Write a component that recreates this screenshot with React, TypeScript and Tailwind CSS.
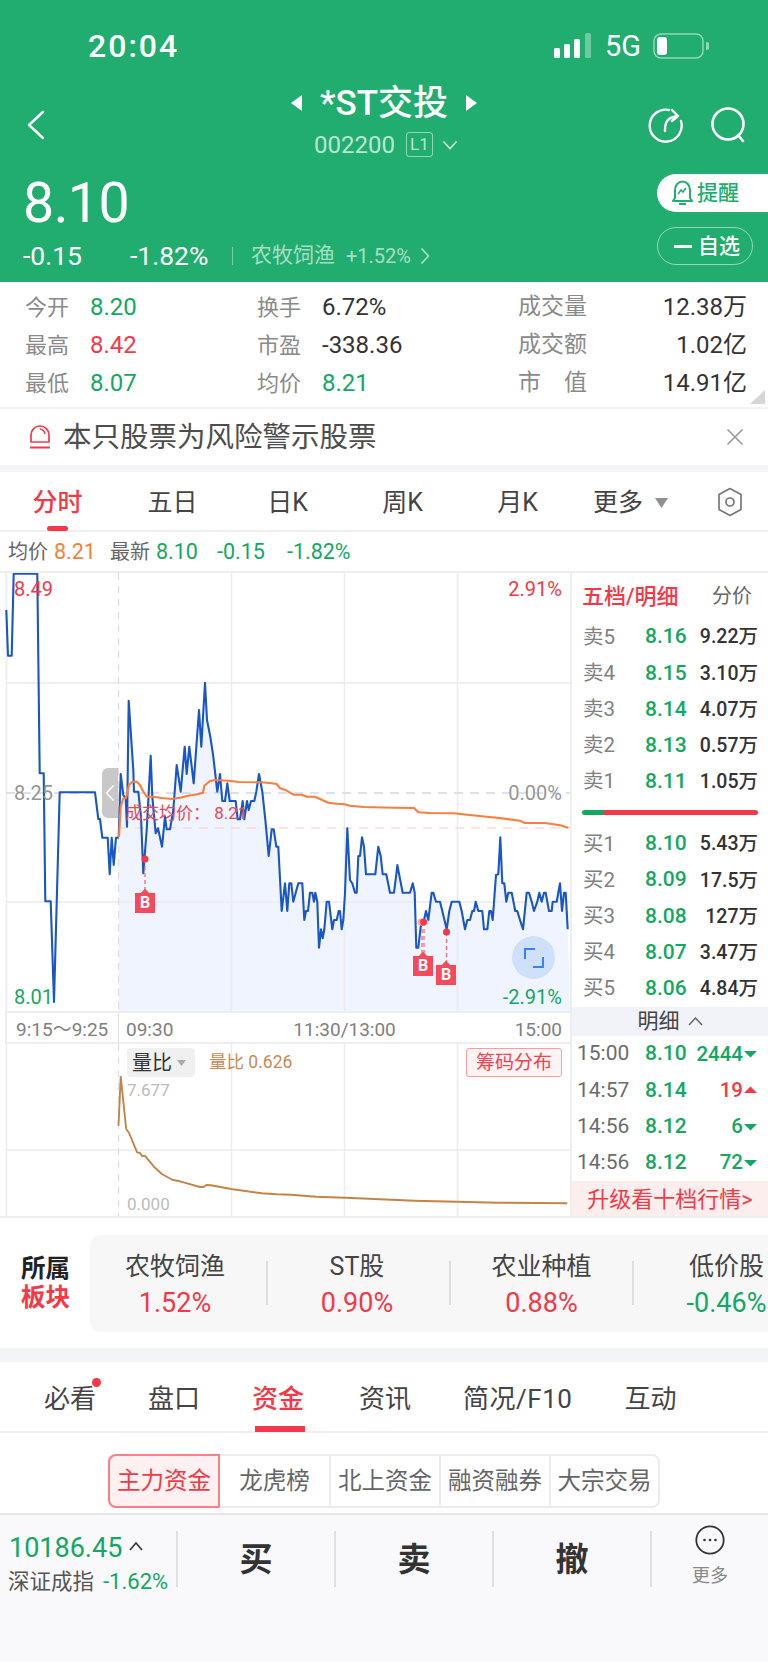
import React from "react";

const z = (ox: number, oy: number, sx: number, sy: number, a: number[]) => {
  const out: string[] = [];
  for (let i = 0; i < a.length; i += 2) out.push(`${(ox + a[i] / sx).toFixed(1)},${(oy + a[i + 1] / sy).toFixed(1)}`);
  return out;
};

const pre = "6.3,610 8,655.7 11.7,655.7 13.7,573.8 37.3,573.8 39.7,773.3 43.7,773.3 45.3,901.3 50.7,901.3 54,1002 59.7,792.3 95,792.3 98.3,819 100,819 102.3,837.7 107.7,837.7 109.7,874.3 111.7,837.7 113.7,865 116,837.7 118.7,837.7";

const main = [
  ...z(115, 670, 3, 3, [11,500,17,312,25,375,32,385,36,470,41,92,55,300,57,365,70,365,78,440,85,610,95,480,107,257,112,380,122,490,129,475,141,530,150,440,155,478,165,478,175,420,185,285,197,365,209,230,215,312,223,230,236,340,252,120,259,230,270,38,276,150,286,200,295,260,307,365,315,312,322,393,330,393,337,340,344,393,362,393,368,448,375,448,383,393,388,448,396,393,401,420,408,393,418,393,424,365,432,312,442,365,451,448,461,558,470,478,476,478,484,530,490,530]),
  ...z(270, 780, 3, 3, [35,393,45,310,52,393,58,310,64,310,70,365,77,338,85,310,97,310,103,420,108,393,114,393,120,338,127,338,132,365,136,338,142,365,147,503,153,448,158,475,163,448,170,365,177,365,187,448,192,420,200,420,206,393,210,393,215,448,220,420,225,340,232,145,240,300,247,310,255,338,260,338,265,228,270,228,276,172,282,200,288,283,316,283,325,200,332,228,338,283,349,283,360,338,372,338,379,283,382,255,398,338,420,338]),
  ...z(410, 780, 3, 3, [8,310,14,338,19,503,25,503,32,440,42,420,48,393,55,420,65,338,70,338,78,365,90,365,97,393,110,448,118,393,125,365,148,365,155,393,165,448,172,420,180,420,187,393,192,393,197,365,205,393,217,393,222,448,232,448,238,393,243,393,248,420,258,285,265,283,271,172,277,310,283,310,289,365,295,338,305,338,316,393,322,393,330,420,339,448,350,338,357,338,365,365,372,393,382,365,388,338,395,365,402,338,407,338,417,393,425,393,428,365,440,365,450,310,456,393,462,338,467,338,473,448]),
];

const avg = [
  ...z(115, 670, 3, 3, [12,500,17,410,25,385,33,385,42,345,52,335,65,335,75,345,85,365,95,380,115,380,140,384,170,387,195,383,220,377,250,372,264,368,268,347,285,333,300,330,340,332,370,336,440,337,470,340,485,342,495,355]),
  ...z(270, 780, 3, 3, [30,25,45,29,60,38,70,44,95,44,110,50,135,50,175,68,200,71,220,72,240,77,280,81,370,83,432,84,445,97]),
  ...z(410, 780, 3, 3, [24,97,60,99,130,100,200,107,260,113,330,122,345,129,405,129,450,136,475,143]),
];

const ratio = z(0, 1010, 2.75, 3, [326,350,332,203,347,360,355,372,377,430,385,432,390,440,400,442,425,475,445,495,475,513,495,517,550,534,560,534,568,528,580,529,640,541,720,553,760,556,800,557,870,563,950,566,1140,575,1370,581,1560,583]);

const GREEN = "text-[#12a862]";
const RED = "text-[#f53847]";

function Stat({ label, value, color }: { label: React.ReactNode; value: string; color: string }) {
  return (
    <div className="flex items-center h-[38px]">
      <div className="w-[65px] text-[22px] text-[#8a8a8a]">{label}</div>
      <div className={`text-[24px] ${color}`}>{value}</div>
    </div>
  );
}

function Quote({ label, price, vol }: { label: string; price: string; vol: string }) {
  return (
    <div className="flex items-center h-[36.2px] pl-[11px] pr-[10px]">
      <span className="w-[62px] text-[20.5px] text-[#808080]">{label}</span>
      <span className={`w-[42px] text-[21px] font-medium ${GREEN}`}>{price}</span>
      <span className="flex-1 text-right text-[19.5px] text-[#333] font-medium">{vol}</span>
    </div>
  );
}

function Trade({ time, price, vol, up }: { time: string; price: string; vol: string; up?: boolean }) {
  return (
    <div className="flex items-center h-[36.25px] pl-[5px] pr-[11px]">
      <span className="w-[68px] text-[21px] text-[#6b6b6b]">{time}</span>
      <span className={`w-[42px] text-[21px] font-medium ${GREEN}`}>{price}</span>
      <span className={`flex-1 text-right text-[20.5px] font-medium ${up ? RED : GREEN}`}>{vol}</span>
      <svg width="13" height="8" viewBox="0 0 13 8" className="ml-[1px]">
        {up ? <path d="M0 7 L6.5 0.5 L13 7 Z" fill="#f53847" /> : <path d="M0 1 L13 1 L6.5 7.5 Z" fill="#12a862" />}
      </svg>
    </div>
  );
}

function Badge({ className }: { className: string }) {
  return (
    <div className={`absolute w-[20px] h-[20px] bg-[#f64a5c] flex items-center justify-center text-white text-[16px] font-bold leading-none ${className}`}>
      <span className="absolute -top-[3px] left-[7px] w-[6px] h-[6px] rotate-45 bg-[#f64a5c]" />
      <span className="relative">B</span>
    </div>
  );
}

export default function App() {
  return (
    <div className="w-[768px] h-[1662px] bg-white flex flex-col overflow-hidden [font-family:Roboto,'Noto_Sans_CJK_SC',sans-serif]">
      {/* Header */}
      <div className="h-[282px] shrink-0 bg-[#21ad6f] text-white flex flex-col">
        <div className="h-[84px] flex items-center pt-[8px] shrink-0">
          <div className="ml-[88px] text-[32px] font-medium tracking-[2px] leading-none">20:04</div>
          <div className="ml-auto flex items-center mr-[59px]">
            <svg width="40" height="26" viewBox="0 0 40 26">
              <rect x="0" y="15" width="6" height="10" rx="1.5" fill="#fff" />
              <rect x="10" y="11" width="6" height="14" rx="1.5" fill="#fff" />
              <rect x="20" y="6" width="6" height="19" rx="1.5" fill="#fff" />
              <rect x="31" y="0" width="6" height="25" rx="1.5" fill="#ffffff" fillOpacity="0.35" />
            </svg>
            <span className="ml-[11px] text-[29px] leading-none">5G</span>
            <svg width="56" height="26" viewBox="0 0 56 26" className="ml-[12px]">
              <rect x="1" y="1" width="49" height="24" rx="7" fill="none" stroke="#ffffff" strokeOpacity="0.5" strokeWidth="1.5" />
              <rect x="4" y="4" width="10" height="18" rx="3" fill="#fff" />
              <path d="M53 9 a4 4 0 0 1 0 8 Z" fill="#ffffff" fillOpacity="0.5" />
            </svg>
          </div>
        </div>
        <div className="h-[79px] grid grid-cols-[1fr_auto_1fr] shrink-0">
          <div className="flex items-center pl-[27px] pt-[2px]">
            <svg width="18" height="30" viewBox="0 0 18 30" fill="none" stroke="#fff" strokeWidth="2.4" strokeLinecap="round" strokeLinejoin="round">
              <path d="M16 2 L2 15 L16 28" />
            </svg>
          </div>
          <div className="flex flex-col items-center">
            <div className="flex items-center h-[36px] mt-[1px]">
              <svg width="12" height="16" viewBox="0 0 12 16"><path d="M11 0 L11 16 L0 8 Z" fill="#fff" /></svg>
              <span className="mx-[17px] text-[35px] leading-none font-medium">*ST交投</span>
              <svg width="12" height="16" viewBox="0 0 12 16"><path d="M1 0 L1 16 L12 8 Z" fill="#fff" /></svg>
            </div>
            <div className="flex items-center mt-[11px] text-white/70 ml-[4px]">
              <span className="text-[24px] leading-none">002200</span>
              <span className="ml-[11px] w-[27px] h-[25px] border border-white/50 rounded-[3px] flex items-center justify-center text-[17px] leading-none">L1</span>
              <svg width="16" height="10" viewBox="0 0 16 10" fill="none" stroke="#ffffffcc" strokeWidth="1.6" className="ml-[9px]"><path d="M1.5 1.5 L8 8.5 L14.5 1.5" /></svg>
            </div>
          </div>
          <div className="flex items-center justify-end pr-[20px] gap-[25px] pt-[2px]">
            <svg width="38" height="36" viewBox="0 0 38 36" fill="none" stroke="#fff" strokeWidth="2.4" strokeLinecap="round">
              <path d="M22 3 A16 16 0 1 0 34 14" />
              <path d="M18 24 C18 15 20 11 30 9" />
              <path d="M25 3 L31 9 L25 14" strokeLinejoin="round" />
            </svg>
            <svg width="38" height="36" viewBox="0 0 38 36" fill="none" stroke="#fff" strokeWidth="2.6" strokeLinecap="round">
              <circle cx="18" cy="17" r="15.5" />
              <path d="M28 28 L33 34" />
            </svg>
          </div>
        </div>
        <div className="flex-1 flex justify-between">
          <div className="pl-[23px] flex flex-col">
            <div className="text-[55.5px] leading-none mt-[13px] tracking-[-0.5px] h-[56px]">8.10</div>
            <div className="flex items-center mt-[9px] h-[30px]">
              <span className="w-[107px] text-[26.5px]">-0.15</span>
              <span className="w-[102px] text-[26.5px]">-1.82%</span>
              <span className="w-px h-[18px] bg-white/40" />
              <span className="ml-[18px] text-[21px] text-white/60">农牧饲渔</span>
              <span className="ml-[11px] text-[20px] text-white/60">+1.52%</span>
              <svg width="10" height="18" viewBox="0 0 10 18" fill="none" stroke="#ffffffa0" strokeWidth="1.6" className="ml-[9px]"><path d="M1.5 1.5 L8.5 9 L1.5 16.5" /></svg>
            </div>
          </div>
          <div className="flex flex-col items-end mt-[11px]">
            <div className="w-[111px] h-[38px] bg-white rounded-l-full flex items-center pl-[15px] text-[#21ad6f]">
              <svg width="21" height="28" viewBox="0 0 21 28" fill="none" stroke="#21ad6f" strokeWidth="2">
                <path d="M3 19 V11 a7.5 8.5 0 0 1 15 0 V19 L20 22 H1 Z" strokeLinejoin="round" />
                <path d="M6 15 L9 11 L11 13 L14 9" strokeWidth="1.5" />
                <path d="M7 25 H14" />
              </svg>
              <span className="ml-[4px] text-[21px] font-medium pt-[2px]">提醒</span>
            </div>
            <div className="mt-[15px] mr-[15px] w-[96px] h-[38px] border border-white/50 rounded-full flex items-center pl-[16px]">
              <span className="w-[18px] h-[3px] bg-white" />
              <span className="ml-[6px] text-[21px] font-medium pt-[1px]">自选</span>
            </div>
          </div>
        </div>
      </div>

      {/* Stats */}
      <div className="h-[125px] shrink-0 relative pl-[25px] pt-[6px] flex">
        <div className="w-[232px]">
          <Stat label="今开" value="8.20" color={GREEN} />
          <Stat label="最高" value="8.42" color={RED} />
          <Stat label="最低" value="8.07" color={GREEN} />
        </div>
        <div className="w-[261px]">
          <Stat label="换手" value="6.72%" color="text-[#333]" />
          <Stat label="市盈" value="-338.36" color="text-[#333]" />
          <Stat label="均价" value="8.21" color={GREEN} />
        </div>
        <div className="w-[229px]">
          {[["成交量", "12.38万"], ["成交额", "1.02亿"]].map(([l, v]) => (
            <div key={l} className="flex items-center justify-between h-[38px]">
              <span className="text-[23px] text-[#8a8a8a]">{l}</span>
              <span className="text-[24px] text-[#333]">{v}</span>
            </div>
          ))}
          <div className="flex items-center justify-between h-[38px]">
            <span className="w-[69px] flex justify-between text-[23px] text-[#8a8a8a]"><span>市</span><span>值</span></span>
            <span className="text-[24px] text-[#333]">14.91亿</span>
          </div>
        </div>
        <svg width="15" height="14" viewBox="0 0 15 14" className="absolute right-[3px] bottom-[3px]"><path d="M15 0 V14 H0 Z" fill="#d6d6d6" /></svg>
      </div>

      {/* Warning */}
      <div className="h-[58px] shrink-0 border-t-2 border-[#f3f4f8] flex items-center pl-[29px] pr-[24px]">
        <svg width="22" height="26" viewBox="0 0 22 26" fill="none" stroke="#f53847" strokeWidth="1.7">
          <path d="M2 18 V11 a9 9 0 0 1 18 0 V18 Z" />
          <path d="M1 23.5 H21" strokeWidth="2" />
          <path d="M11 5 a6 6 0 0 1 5 5" strokeWidth="1.4" />
        </svg>
        <span className="ml-[12px] text-[28.5px] text-[#4d4d4d] leading-none pt-[2px]">本只股票为风险警示股票</span>
        <svg width="18" height="18" viewBox="0 0 18 18" fill="none" stroke="#9a9a9a" strokeWidth="1.6" className="ml-auto"><path d="M1.5 1.5 L16.5 16.5 M16.5 1.5 L1.5 16.5" /></svg>
      </div>
      <div className="h-[7px] shrink-0 bg-[#f3f4f8]" />

      {/* Period tabs */}
      <div className="h-[60px] shrink-0 border-b-2 border-[#eeeeee] flex items-center relative text-[25px] text-[#444] pt-[4px]">
        <div className={`w-[115px] text-center font-medium ${RED}`}>分时</div>
        <div className="w-[115px] text-center">五日</div>
        <div className="w-[115px] text-center">日K</div>
        <div className="w-[115px] text-center">周K</div>
        <div className="w-[115px] text-center">月K</div>
        <div className="ml-[18px] flex items-center">
          <span>更多</span>
          <svg width="13" height="10" viewBox="0 0 13 10" className="ml-[12px]"><path d="M0 0 H13 L6.5 10 Z" fill="#8f8f8f" /></svg>
        </div>
        <svg width="26" height="30" viewBox="0 0 26 30" fill="none" stroke="#777" strokeWidth="1.7" className="ml-[49px] -mt-[3px]">
          <path d="M13 1.5 L24 7.5 V22.5 L13 28.5 L2 22.5 V7.5 Z" strokeLinejoin="round" />
          <circle cx="13" cy="15" r="4" />
        </svg>
        <span className="absolute left-[47px] bottom-[-1px] w-[21px] h-[5px] rounded-full bg-[#f53847]" />
      </div>

      {/* Legend */}
      <div className="h-[41px] shrink-0 border-b-2 border-[#eeeeee] flex items-center pl-[8px] text-[21.5px] leading-none pt-[1px]">
        <span className="text-[#666] text-[20px] w-[46px]">均价</span>
        <span className="text-[#f6803a] w-[56px]">8.21</span>
        <span className="text-[#666] text-[20px] w-[46px]">最新</span>
        <span className={`${GREEN} w-[61px]`}>8.10</span>
        <span className={`${GREEN} w-[70px]`}>-0.15</span>
        <span className={GREEN}>-1.82%</span>
      </div>

      {/* Chart + panel */}
      <div className="h-[645px] shrink-0 flex border-b-2 border-[#eeeeee]">
        <div className="ml-[5px] w-[565px] flex flex-col">
          <div className="relative h-[438px] text-[20px] leading-none">
            <svg width="565" height="438" viewBox="5 573 565 438" className="absolute inset-0">
              <polygon points={`${main.join(" ")} 570,1011 118.7,1011`} fill="#eff4fe" />
              <g stroke="#ececee" strokeWidth="1.5">
                <path d="M6.5 573 V1011" />
                <path d="M6 683 H570 M6 902 H570" />
                <path d="M231.5 573 V1011 M344.5 573 V1011 M457.5 573 V1011" />
              </g>
              <path d="M118.5 573 V1011" stroke="#dddddd" strokeWidth="1.2" strokeDasharray="7 6" />
              <path d="M6 793 H570" stroke="#cdd9e8" strokeWidth="1.3" strokeDasharray="9 7" />
              <path d="M119 828 H570" stroke="#fbd9dd" strokeWidth="1.5" strokeDasharray="9 7" />
              <polyline points={pre} fill="none" stroke="#1a56c4" strokeWidth="2.1" strokeLinejoin="round" />
              <polyline points={main.join(" ")} fill="none" stroke="#1a56c4" strokeWidth="2.1" strokeLinejoin="round" />
              <polyline points={avg.join(" ")} fill="none" stroke="#ff7d3c" strokeWidth="2.1" strokeLinejoin="round" />
              <g stroke="#f4697a" strokeWidth="1.3" strokeDasharray="4 3">
                <path d="M145 859 V892 M422 922 V955 M424 922 V955 M446.5 932 V964" />
              </g>
              <circle cx="421" cy="922" r="3.5" fill="#f9a5ae" />
              <g fill="#f53847">
                <circle cx="145" cy="859" r="3.5" />
                <circle cx="423.6" cy="922" r="3.5" />
                <circle cx="446.5" cy="932" r="3.5" />
              </g>
            </svg>
            <span className={`absolute left-[9px] top-[6px] ${RED}`}>8.49</span>
            <span className={`absolute right-[8px] top-[6px] ${RED}`}>2.91%</span>
            <span className="absolute left-[9px] top-[210px] text-[#969696]">8.25</span>
            <span className="absolute right-[8px] top-[210px] text-[#969696]">0.00%</span>
            <span className={`absolute left-[9px] top-[414px] ${GREEN}`}>8.01</span>
            <span className={`absolute right-[8px] top-[414px] ${GREEN}`}>-2.91%</span>
            <div className="absolute left-[97px] top-[195px] w-[16px] h-[50px] bg-[#c8c8c8] rounded-l-[6px] flex items-center justify-center">
              <svg width="10" height="18" viewBox="0 0 10 18" fill="none" stroke="#fff" strokeWidth="1.4"><path d="M8.5 1.5 L1.5 9 L8.5 16.5" /></svg>
            </div>
            <span className="absolute left-[120px] top-[232px] text-[17px] text-[#e84856] whitespace-nowrap">成交均价： 8.21</span>
            <Badge className="left-[130px] top-[320px]" />
            <Badge className="left-[408px] top-[383px]" />
            <Badge className="left-[431px] top-[392px]" />
            <div className="absolute left-[507px] top-[363px] w-[43px] h-[43px] rounded-full bg-[#cfe0fb] flex items-center justify-center">
              <svg width="20" height="20" viewBox="0 0 20 20" fill="none" stroke="#3b82f6" strokeWidth="2">
                <path d="M1 11 V1 H11" />
                <path d="M19 9 V19 H9" />
              </svg>
            </div>
          </div>
          <div className="h-[33px] relative flex items-center border-t-2 border-b-2 border-[#eeeeee] border-l-2 text-[19px] text-[#808080] leading-none">
            <span className="w-[112px] pl-[9px] whitespace-nowrap border-r border-[#e0e0e0] h-full flex items-center pt-[3px]">9:15～9:25</span>
            <span className="ml-[7px] pt-[3px]">09:30</span>
            <span className="ml-[120px] pt-[3px]">11:30/13:00</span>
            <span className="ml-auto mr-[8px] pt-[3px]">15:00</span>
          </div>
          <div className="relative flex-1">
            <svg width="565" height="172" viewBox="5 1045 565 172" className="absolute inset-0">
              <g stroke="#ececee" strokeWidth="1.5">
                <path d="M6.5 1045 V1217" />
                <path d="M6 1151 H570" />
                <path d="M231.5 1045 V1217 M344.5 1045 V1217 M457.5 1045 V1217" />
              </g>
              <path d="M118.5 1045 V1217" stroke="#dddddd" strokeWidth="1.2" strokeDasharray="7 6" />
              <polyline points={ratio.join(" ")} fill="none" stroke="#c58447" strokeWidth="1.9" strokeLinejoin="round" />
            </svg>
            <div className="absolute left-[122px] top-[4px] w-[68px] h-[29px] bg-[#f0f0f0] rounded-[4px] flex items-center pl-[5px]">
              <span className="text-[20px] text-[#333] leading-none">量比</span>
              <svg width="9" height="6" viewBox="0 0 9 6" className="ml-[5px]"><path d="M0 0 H9 L4.5 6 Z" fill="#aaaaaa" /></svg>
            </div>
            <span className="absolute left-[204px] top-[10px] text-[17.5px] leading-none text-[#c68a55]">量比 0.626</span>
            <div className="absolute left-[461px] top-[4px] w-[96px] h-[29px] border border-[#ff9a9f] bg-[#fff4f4] rounded-[3px] flex items-center justify-center text-[19px] leading-none text-[#f4404c]">筹码分布</div>
            <span className="absolute left-[122px] top-[38px] text-[17px] leading-none text-[#bbbbbb]">7.677</span>
            <span className="absolute left-[122px] top-[152px] text-[17px] leading-none text-[#bbbbbb]">0.000</span>
          </div>
        </div>
        <div className="w-[198px] border-l-2 border-[#eeeeee] flex flex-col">
          <div className="h-[46px] flex items-center pl-[10px] pr-[16px] justify-between">
            <span className={`text-[22px] font-medium ${RED}`}>五档/明细</span>
            <span className="text-[20px] text-[#666]">分价</span>
          </div>
          <Quote label="卖5" price="8.16" vol="9.22万" />
          <Quote label="卖4" price="8.15" vol="3.10万" />
          <Quote label="卖3" price="8.14" vol="4.07万" />
          <Quote label="卖2" price="8.13" vol="0.57万" />
          <Quote label="卖1" price="8.11" vol="1.05万" />
          <div className="h-[26px] flex items-center px-[10px]">
            <div className="w-full h-[5px] rounded-full bg-[linear-gradient(105deg,#12a862_12%,#f53847_13%)]" />
          </div>
          <Quote label="买1" price="8.10" vol="5.43万" />
          <Quote label="买2" price="8.09" vol="17.5万" />
          <Quote label="买3" price="8.08" vol="127万" />
          <Quote label="买4" price="8.07" vol="3.47万" />
          <Quote label="买5" price="8.06" vol="4.84万" />
          <div className="h-[29px] bg-[#f2f3f8] flex items-center justify-center text-[21px] text-[#444]">
            <span>明细</span>
            <svg width="15" height="9" viewBox="0 0 15 9" fill="none" stroke="#666" strokeWidth="1.5" className="ml-[8px]"><path d="M1 8 L7.5 1 L14 8" /></svg>
          </div>
          <Trade time="15:00" price="8.10" vol="2444" />
          <Trade time="14:57" price="8.14" vol="19" up />
          <Trade time="14:56" price="8.12" vol="6" />
          <Trade time="14:56" price="8.12" vol="72" />
          <div className={`flex-1 bg-[#fdeeee] flex items-center justify-center text-[22px] pt-[2px] ${RED}`}>升级看十档行情&gt;</div>
        </div>
      </div>

      {/* Sectors */}
      <div className="h-[130px] shrink-0 flex items-center">
        <div className="w-[90px] pl-[21px] text-[24.5px] leading-[29px] font-bold">
          <div className="text-[#222]">所属</div>
          <div className={RED}>板块</div>
        </div>
        <div className="flex-1 h-[97px] bg-[#f7f7f8] rounded-l-[10px] flex items-center overflow-hidden">
          {[
            ["农牧饲渔", "1.52%", RED, "w-[178px] pr-[6px]"],
            ["ST股", "0.90%", RED, "w-[183px] pr-[3px]"],
            ["农业种植", "0.88%", RED, "w-[183px]"],
            ["低价股", "-0.46%", GREEN, "w-[134px] pl-[51px]"],
          ].map(([a, b, c, w], i) => (
            <div key={a} className={`shrink-0 h-[44px] flex flex-col items-center justify-center relative ${w} ${i < 3 ? "border-r-2 border-[#dedede]" : ""}`}>
              <span className="absolute top-[-9px] text-[25px] text-[#444] whitespace-nowrap leading-[30px]">{a}</span>
              <span className={`absolute top-[27px] text-[27px] whitespace-nowrap leading-[30px] ${c}`}>{b}</span>
            </div>
          ))}
        </div>
      </div>
      <div className="h-[14px] shrink-0 bg-[#f3f4f8]" />

      {/* Info tabs */}
      <div className="h-[71px] shrink-0 border-b-2 border-[#eeeeee] flex items-center pl-[44px] gap-[52px] text-[26px] text-[#444] relative pt-[6px]">
        <span className="relative">必看<span className="absolute top-[-2px] -right-[5px] w-[9px] h-[9px] rounded-full bg-[#f53847]" /></span>
        <span>盘口</span>
        <span className={`font-medium ${RED}`}>资金</span>
        <span className="ml-[3px]">资讯</span>
        <span className="tracking-[0.5px]">简况/F10</span>
        <span>互动</span>
        <span className="absolute left-[255px] bottom-[-1px] w-[50px] h-[6px] bg-[#f53847]" />
      </div>

      {/* Segment */}
      <div className="h-[80px] shrink-0 flex justify-center pt-[21px]">
        <div className="w-[552px] h-[54px] border-2 border-[#ececec] rounded-[8px] flex text-[23.5px] text-[#666]">
          <div className={`-m-[2px] mr-0 w-[112px] border-2 border-[#fb7f88] bg-[#fff1f1] rounded-l-[8px] flex items-center justify-center pt-[2px] ${RED}`}>主力资金</div>
          <div className="w-[109px] flex items-center justify-center pt-[2px]">龙虎榜</div>
          <div className="w-[110px] border-l-2 border-[#ececec] flex items-center justify-center pt-[2px]">北上资金</div>
          <div className="w-[110px] border-l-2 border-[#ececec] flex items-center justify-center pt-[2px]">融资融券</div>
          <div className="flex-1 border-l-2 border-[#ececec] flex items-center justify-center pt-[2px]">大宗交易</div>
        </div>
      </div>

      {/* Bottom bar */}
      <div className="flex-1 border-t-2 border-[#e6e6e6] bg-[#f9f9fb] pt-[16px]">
        <div className="flex h-[56px]">
          <div className="w-[176px] pl-[8px] relative">
            <div className={`absolute left-[9px] top-[4px] text-[27px] leading-none ${GREEN} flex items-center`}>
              <span>10186.45</span>
              <svg width="14" height="9" viewBox="0 0 14 9" fill="none" stroke="#333" strokeWidth="1.6" className="ml-[7px] mb-[4px]"><path d="M1 8 L7 1 L13 8" /></svg>
            </div>
            <div className="absolute left-[8px] top-[40px] flex items-center leading-none whitespace-nowrap">
              <span className="text-[21.5px] text-[#555]">深证成指</span>
              <span className={`ml-[9px] text-[22px] ${GREEN}`}>-1.62%</span>
            </div>
          </div>
          {["买", "卖", "撤"].map((t) => (
            <div key={t} className="w-[158px] border-l-2 border-[#e0e0e0] flex items-center justify-center text-[33px] font-bold text-[#333] leading-none">{t}</div>
          ))}
          <div className="flex-1 border-l-2 border-[#e0e0e0] relative flex flex-col items-center">
            <svg width="30" height="30" viewBox="0 0 30 30" className="absolute top-[-6px]" fill="none">
              <circle cx="15" cy="15" r="13.7" stroke="#333" strokeWidth="1.8" />
              <circle cx="9.5" cy="15" r="1.3" fill="#333" /><circle cx="15" cy="15" r="1.3" fill="#333" /><circle cx="20.5" cy="15" r="1.3" fill="#333" />
            </svg>
            <span className="absolute top-[36px] text-[18px] leading-none text-[#888]">更多</span>
          </div>
        </div>
      </div>
    </div>
  );
}
